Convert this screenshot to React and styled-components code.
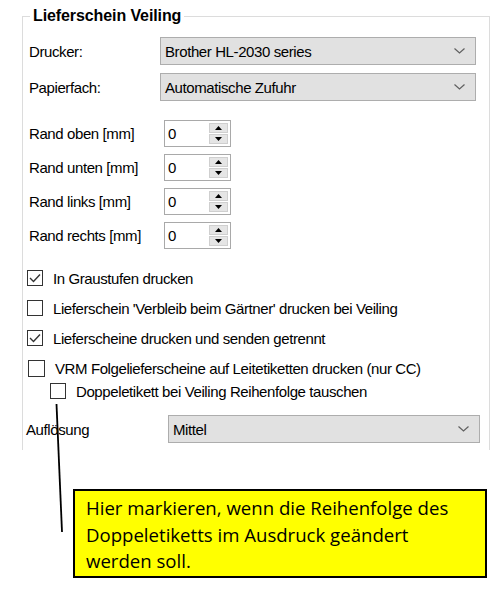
import React from "react";
import styled, { createGlobalStyle } from "styled-components";

const GlobalStyle = createGlobalStyle`
  body {
    margin: 0;
    background: #ffffff;
    font-family: "Liberation Sans", Arial, sans-serif;
    color: #000;
  }
`;

const Page = styled.div`
  position: relative;
  width: 501px;
  height: 601px;
  overflow: hidden;
`;

const GroupBox = styled.fieldset`
  box-sizing: border-box;
  margin: 6px 0 0 22px;
  width: 468px;
  height: 444px;
  padding: 0 0 0 6px;
  border: 1px solid #dcdcdc;
  border-bottom: none;
  min-width: 0;
`;

const Legend = styled.legend`
  font-weight: bold;
  font-size: 16px;
  line-height: 20px;
  letter-spacing: -0.1px;
  padding: 0 3px;
  margin-left: 1px;
`;

const Label = styled.span`
  font-size: 15px;
  letter-spacing: -0.4px;
  width: ${(p) => p.$width || 131}px;
  flex: none;
  margin-left: ${(p) => p.$shift || 0}px;
`;

const FormRow = styled.div`
  display: flex;
  align-items: center;
  height: ${(p) => p.$height || 28}px;
  margin-top: ${(p) => p.$top || 0}px;
`;

const Select = styled.div`
  box-sizing: border-box;
  display: flex;
  align-items: center;
  justify-content: space-between;
  width: ${(p) => p.$width}px;
  height: 100%;
  background: #e1e1e1;
  border: 1px solid #adadad;
  padding: 0 10px 0 4px;
  font-size: 15px;
  letter-spacing: -0.4px;
`;

const Chevron = () => (
  <svg width="11" height="6" viewBox="0 0 11 6">
    <path d="M0.5 0.5 L5.5 5 L10.5 0.5" fill="none" stroke="#606060" strokeWidth="1.2" />
  </svg>
);

const SpinGroup = styled.div`
  display: flex;
  flex-direction: column;
  gap: 7px;
  margin-top: 19px;
`;

const SpinBox = styled.div`
  box-sizing: border-box;
  display: flex;
  align-items: center;
  justify-content: space-between;
  width: 67px;
  height: 27px;
  border: 1px solid #a9a9a9;
  background: #fff;
  padding: 0 2px 0 3px;
  font-size: 15px;
`;

const SpinButtons = styled.div`
  display: flex;
  flex-direction: column;
  gap: 1px;
`;

const SpinButton = styled.div`
  width: 19px;
  height: 10px;
  background: #e5e5e5;
  border: 1px solid #cfcfcf;
  box-sizing: border-box;
  display: flex;
  align-items: center;
  justify-content: center;
`;

const Triangle = ({ down }) => (
  <svg width="7" height="4" viewBox="0 0 7 4">
    <path d={down ? "M0 0 L7 0 L3.5 4 Z" : "M0 4 L7 4 L3.5 0 Z"} fill="#000" />
  </svg>
);

const CheckList = styled.div`
  display: flex;
  flex-direction: column;
  margin-top: 21px;
`;

const CheckRow = styled.div`
  display: flex;
  align-items: center;
  height: 16px;
  margin-top: ${(p) => p.$top || 0}px;
  margin-left: ${(p) => p.$indent || -2}px;
  gap: ${(p) => p.$gap || 10}px;
  font-size: 15px;
  letter-spacing: -0.4px;
  white-space: nowrap;
`;

const Box = styled.div`
  box-sizing: border-box;
  width: ${(p) => p.$size || 16}px;
  height: ${(p) => p.$size || 16}px;
  border: 1px solid #333;
  background: #fff;
  flex: none;
  display: flex;
  align-items: center;
  justify-content: center;
`;

const Check = () => (
  <svg width="12" height="10" viewBox="0 0 12 10">
    <path d="M1 5 L4.5 8.5 L11 1.5" fill="none" stroke="#333" strokeWidth="1.4" />
  </svg>
);

const Callout = styled.div`
  box-sizing: border-box;
  margin: 39px 0 0 73px;
  width: 414px;
  height: 89px;
  background: #ffff00;
  border: 2px solid #000;
  padding: 4px 8px 0 11px;
  font-family: "Open Sans", Lato, sans-serif;
  font-size: 18.6px;
  line-height: 26.5px;
  white-space: nowrap;
`;

const Pointer = styled.svg`
  position: absolute;
  left: 0;
  top: 0;
  pointer-events: none;
`;

const margins = [
  "Rand oben [mm]",
  "Rand unten [mm]",
  "Rand links [mm]",
  "Rand rechts [mm]",
];

const App = () => {
  return (
    <Page>
      <GlobalStyle />
      <GroupBox>
        <Legend>Lieferschein Veiling</Legend>
        <FormRow $top={11}>
          <Label>Drucker:</Label>
          <Select $width={316}>
            Brother HL-2030 series
            <Chevron />
          </Select>
        </FormRow>
        <FormRow $top={8}>
          <Label>Papierfach:</Label>
          <Select $width={316}>
            Automatische Zufuhr
            <Chevron />
          </Select>
        </FormRow>

        <SpinGroup>
          {margins.map((m) => (
            <FormRow key={m} $height={27}>
              <Label $width={135}>{m}</Label>
              <SpinBox>
                0
                <SpinButtons>
                  <SpinButton>
                    <Triangle />
                  </SpinButton>
                  <SpinButton>
                    <Triangle down />
                  </SpinButton>
                </SpinButtons>
              </SpinBox>
            </FormRow>
          ))}
        </SpinGroup>

        <CheckList>
          <CheckRow>
            <Box>
              <Check />
            </Box>
            In Graustufen drucken
          </CheckRow>
          <CheckRow $top={14}>
            <Box />
            Lieferschein 'Verbleib beim Gärtner' drucken bei Veiling
          </CheckRow>
          <CheckRow $top={14}>
            <Box>
              <Check />
            </Box>
            Lieferscheine drucken und senden getrennt
          </CheckRow>
          <CheckRow $top={14} $indent={-1}>
            <Box $size={17} />
            VRM Folgelieferscheine auf Leitetiketten drucken (nur CC)
          </CheckRow>
          <CheckRow $top={7} $indent={21}>
            <Box />
            Doppeletikett bei Veiling Reihenfolge tauschen
          </CheckRow>
        </CheckList>

        <FormRow $top={16}>
          <Label $width={142} $shift={-3}>
            Auflösung
          </Label>
          <Select $width={312}>
            Mittel
            <Chevron />
          </Select>
        </FormRow>
      </GroupBox>

      <Callout>
        Hier markieren, wenn die Reihenfolge des
        <br />
        Doppeletiketts im Ausdruck geändert
        <br />
        werden soll.
      </Callout>

      <Pointer width="501" height="601">
        <line x1="56.5" y1="404" x2="62" y2="532" stroke="#000" strokeWidth="1.8" />
      </Pointer>
    </Page>
  );
};

export default App;
